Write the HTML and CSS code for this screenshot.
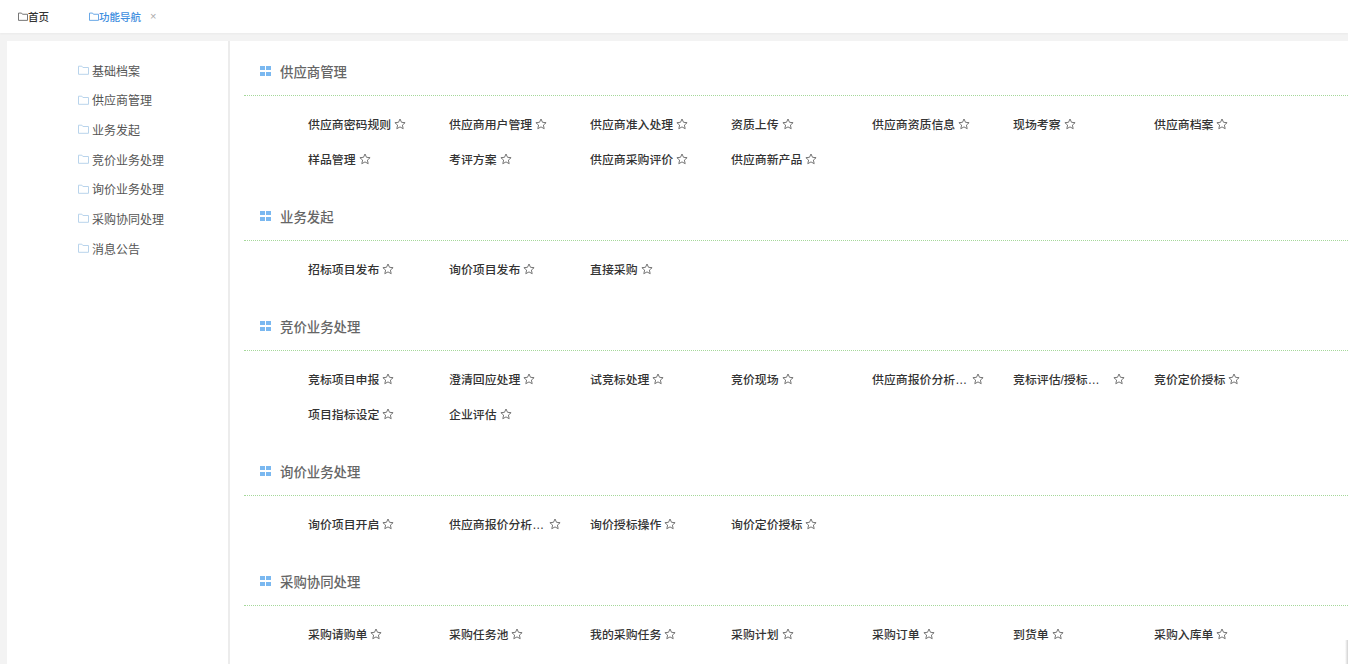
FILE: index.html
```html
<!DOCTYPE html>
<html lang="zh-CN">
<head>
    <meta charset="UTF-8">
    <title>功能导航</title>
    <link rel="stylesheet" href="styles.css">
</head>
<body>
    <svg class="defs" width="0" height="0">
        <symbol id="folder" viewBox="0 0 11 10">
            <path d="M.5 1.2h3.4l1 1.3h5.6v6.8H.5z" fill="none" stroke="currentColor" stroke-width="1"/>
        </symbol>
        <symbol id="star" viewBox="0 0 12 12">
            <path d="M6 1l1.5 3.3 3.6.4-2.7 2.4.8 3.6L6 8.9l-3.2 1.8.8-3.6L.9 4.7l3.6-.4z" fill="none" stroke="currentColor" stroke-width=".9" stroke-linejoin="round"/>
        </symbol>
    </svg>

    <div class="tabs">
        <a class="tab"><svg class="tab-icon"><use href="#folder"/></svg>首页</a>
        <a class="tab active"><svg class="tab-icon"><use href="#folder"/></svg>功能导航<span class="close">×</span></a>
    </div>

    <div class="main">
        <ul class="side">
            <li><svg class="side-icon"><use href="#folder"/></svg>基础档案</li>
            <li><svg class="side-icon"><use href="#folder"/></svg>供应商管理</li>
            <li><svg class="side-icon"><use href="#folder"/></svg>业务发起</li>
            <li><svg class="side-icon"><use href="#folder"/></svg>竞价业务处理</li>
            <li><svg class="side-icon"><use href="#folder"/></svg>询价业务处理</li>
            <li><svg class="side-icon"><use href="#folder"/></svg>采购协同处理</li>
            <li><svg class="side-icon"><use href="#folder"/></svg>消息公告</li>
        </ul>

        <div class="content">
            <div class="section">
                <h3 class="section-title"><span class="grid-icon"><i></i><i></i><i></i><i></i></span>供应商管理</h3>
                <div class="items">
                    <a class="item"><span>供应商密码规则</span><svg class="star"><use href="#star"/></svg></a>
                    <a class="item"><span>供应商用户管理</span><svg class="star"><use href="#star"/></svg></a>
                    <a class="item"><span>供应商准入处理</span><svg class="star"><use href="#star"/></svg></a>
                    <a class="item"><span>资质上传</span><svg class="star"><use href="#star"/></svg></a>
                    <a class="item"><span>供应商资质信息</span><svg class="star"><use href="#star"/></svg></a>
                    <a class="item"><span>现场考察</span><svg class="star"><use href="#star"/></svg></a>
                    <a class="item"><span>供应商档案</span><svg class="star"><use href="#star"/></svg></a>
                    <a class="item"><span>样品管理</span><svg class="star"><use href="#star"/></svg></a>
                    <a class="item"><span>考评方案</span><svg class="star"><use href="#star"/></svg></a>
                    <a class="item"><span>供应商采购评价</span><svg class="star"><use href="#star"/></svg></a>
                    <a class="item"><span>供应商新产品</span><svg class="star"><use href="#star"/></svg></a>
                </div>
            </div>

            <div class="section">
                <h3 class="section-title"><span class="grid-icon"><i></i><i></i><i></i><i></i></span>业务发起</h3>
                <div class="items">
                    <a class="item"><span>招标项目发布</span><svg class="star"><use href="#star"/></svg></a>
                    <a class="item"><span>询价项目发布</span><svg class="star"><use href="#star"/></svg></a>
                    <a class="item"><span>直接采购</span><svg class="star"><use href="#star"/></svg></a>
                </div>
            </div>

            <div class="section">
                <h3 class="section-title"><span class="grid-icon"><i></i><i></i><i></i><i></i></span>竞价业务处理</h3>
                <div class="items">
                    <a class="item"><span>竞标项目申报</span><svg class="star"><use href="#star"/></svg></a>
                    <a class="item"><span>澄清回应处理</span><svg class="star"><use href="#star"/></svg></a>
                    <a class="item"><span>试竞标处理</span><svg class="star"><use href="#star"/></svg></a>
                    <a class="item"><span>竞价现场</span><svg class="star"><use href="#star"/></svg></a>
                    <a class="item"><span class="long">供应商报价分析…</span><svg class="star"><use href="#star"/></svg></a>
                    <a class="item"><span class="long">竞标评估/授标…</span><svg class="star"><use href="#star"/></svg></a>
                    <a class="item"><span>竞价定价授标</span><svg class="star"><use href="#star"/></svg></a>
                    <a class="item"><span>项目指标设定</span><svg class="star"><use href="#star"/></svg></a>
                    <a class="item"><span>企业评估</span><svg class="star"><use href="#star"/></svg></a>
                </div>
            </div>

            <div class="section">
                <h3 class="section-title"><span class="grid-icon"><i></i><i></i><i></i><i></i></span>询价业务处理</h3>
                <div class="items">
                    <a class="item"><span>询价项目开启</span><svg class="star"><use href="#star"/></svg></a>
                    <a class="item"><span class="long">供应商报价分析…</span><svg class="star"><use href="#star"/></svg></a>
                    <a class="item"><span>询价授标操作</span><svg class="star"><use href="#star"/></svg></a>
                    <a class="item"><span>询价定价授标</span><svg class="star"><use href="#star"/></svg></a>
                </div>
            </div>

            <div class="section">
                <h3 class="section-title"><span class="grid-icon"><i></i><i></i><i></i><i></i></span>采购协同处理</h3>
                <div class="items">
                    <a class="item"><span>采购请购单</span><svg class="star"><use href="#star"/></svg></a>
                    <a class="item"><span>采购任务池</span><svg class="star"><use href="#star"/></svg></a>
                    <a class="item"><span>我的采购任务</span><svg class="star"><use href="#star"/></svg></a>
                    <a class="item"><span>采购计划</span><svg class="star"><use href="#star"/></svg></a>
                    <a class="item"><span>采购订单</span><svg class="star"><use href="#star"/></svg></a>
                    <a class="item"><span>到货单</span><svg class="star"><use href="#star"/></svg></a>
                    <a class="item"><span>采购入库单</span><svg class="star"><use href="#star"/></svg></a>
                </div>
            </div>
        </div>
    </div>

    <div class="corner-shadow"></div>
</body>
</html>
```

FILE: styles.css
```css
html, body {
    height: 100%;
    overflow: hidden;
}
body {
    margin: 0;
    display: flex;
    flex-direction: column;
    font-family: "Liberation Sans", "Noto Sans CJK SC", sans-serif;
    font-size: 12px;
    color: #333;
    background-color: #f3f3f3;
}
.defs {
    position: absolute;
}
.tabs {
    display: flex;
    flex: none;
    height: 33px;
    padding-left: 18px;
    background: white;
    box-shadow: 0 1px 2px rgba(0, 0, 0, 0.04);
}
.tab {
    display: flex;
    align-items: center;
    height: 32px;
    margin-right: 40px;
    font-size: 10.5px;
    font-weight: 500;
}
.tab.active {
    color: #3f8fe0;
}
.tab-icon {
    width: 10px;
    height: 9px;
    color: #666;
}
.tab.active .tab-icon {
    color: #5a9fe4;
}
.close {
    margin-left: 9px;
    font-size: 11px;
    font-weight: 400;
    color: #aaa;
}
.main {
    display: flex;
    flex: 1;
    min-height: 0;
    margin: 8px 0 0 7px;
    background: white;
}
.side {
    flex: none;
    width: 223px;
    margin: 0;
    padding: 14.2px 0 0 71px;
    box-sizing: border-box;
    list-style: none;
    border-right: 2px solid #ececec;
    color: #555;
}
.side li {
    display: flex;
    align-items: center;
    height: 29.7px;
}
.side-icon {
    width: 11px;
    height: 10px;
    margin-right: 3px;
    color: #b9d4ec;
}
.content {
    flex: 1;
    min-width: 0;
    padding-left: 14px;
}
.section {
    padding-top: 18px;
}
.section-title {
    display: flex;
    align-items: center;
    height: 24px;
    margin: 0;
    padding: 0 0 12px 16px;
    font-size: 13.4px;
    font-weight: 500;
    color: #666;
    border-bottom: 1px dotted #a5d89a;
}
.grid-icon {
    display: grid;
    grid-template-columns: 5px 5px;
    grid-auto-rows: 4px;
    gap: 2px 1px;
    margin-right: 9px;
}
.grid-icon i {
    background-color: #7ab8f0;
}
.items {
    display: flex;
    flex-wrap: wrap;
    padding: 10px 0 10px 64px;
}
.item {
    display: flex;
    align-items: center;
    width: 141px;
    height: 35px;
    font-size: 11.9px;
    font-weight: 500;
}
.item .long {
    width: 97px;
}
.star {
    flex: none;
    width: 12px;
    height: 12px;
    margin-left: 3px;
    color: #666;
}
.corner-shadow {
    position: absolute;
    right: 0;
    bottom: 0;
    width: 3px;
    height: 24px;
    background: linear-gradient(to right, rgba(0, 0, 0, 0), rgba(0, 0, 0, 0.18));
}
```
